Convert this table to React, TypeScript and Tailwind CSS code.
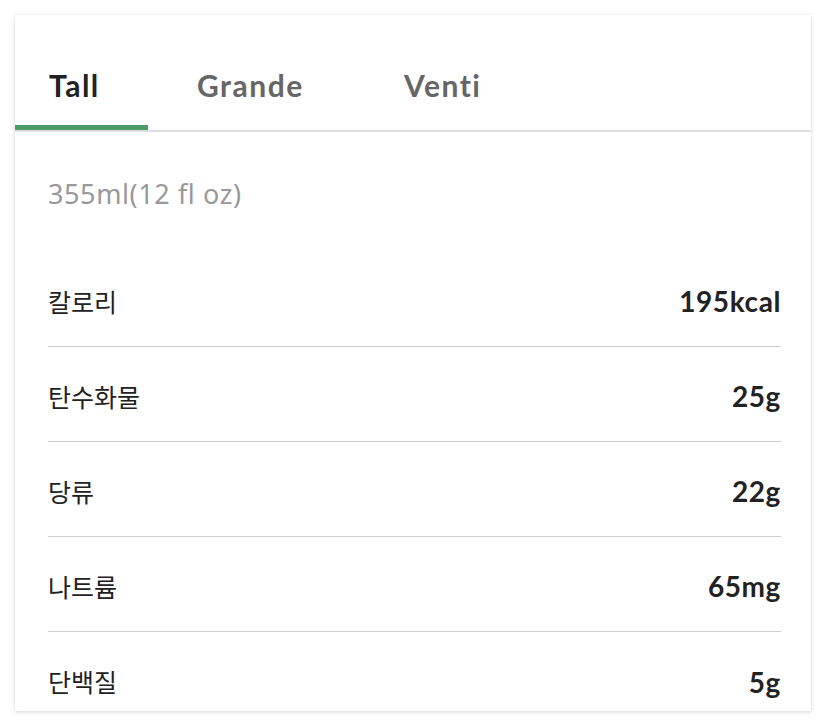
import React from "react";

const rows = [
  { label: "칼로리", value: "195kcal" },
  { label: "탄수화물", value: "25g" },
  { label: "당류", value: "22g" },
  { label: "나트륨", value: "65mg" },
  { label: "단백질", value: "5g" },
];

export default function App() {
  return (
    <div className="w-[826px] h-[726px] bg-white pt-[15px] pl-[15px] overflow-hidden">
      <div className="w-[796px] h-[696px] bg-white shadow-[0_0_4px_rgba(0,0,0,0.12),0_2px_3px_rgba(0,0,0,0.08)] flex flex-col">
        <div className="h-[117px] border-b-2 border-[#dedede] flex items-end font-['Lato',sans-serif] font-bold text-[30px] tracking-[1.5px]">
          <div className="w-[133px] h-[115px] flex flex-col justify-end">
            <div className="pl-[34px] pb-[20px] leading-[40px] text-[#222]">Tall</div>
            <div className="h-[5px] bg-[#4d9c69]" />
          </div>
          <div className="w-[256px] h-[115px] flex flex-col justify-end">
            <div className="pl-[49px] pb-[25px] leading-[40px] text-[#666]">Grande</div>
          </div>
          <div className="h-[115px] flex flex-col justify-end">
            <div className="pl-[0px] pb-[25px] leading-[40px] text-[#666]">Venti</div>
          </div>
        </div>
        <div className="pl-[33px] pr-[30px] flex flex-col">
          <div className="h-[120px] flex items-center font-['Noto_Sans',sans-serif] text-[27px] tracking-[0.6px] text-[#999] pt-[4px]">
            355ml(12 fl oz)
          </div>
          {rows.map((r, i) => (
            <div
              key={r.label}
              className={`h-[95px] flex items-center justify-between ${i < rows.length - 1 ? "border-b border-[#cfcfcf]" : ""}`}
            >
              <span className="font-['Noto_Sans_CJK_KR',sans-serif] text-[25px] text-[#222] leading-none pt-[4px]">
                {r.label}
              </span>
              <span className="font-['Lato',sans-serif] font-bold text-[28px] tracking-[0.6px] text-[#222] leading-none pt-[4px]">
                {r.value}
              </span>
            </div>
          ))}
        </div>
      </div>
    </div>
  );
}
